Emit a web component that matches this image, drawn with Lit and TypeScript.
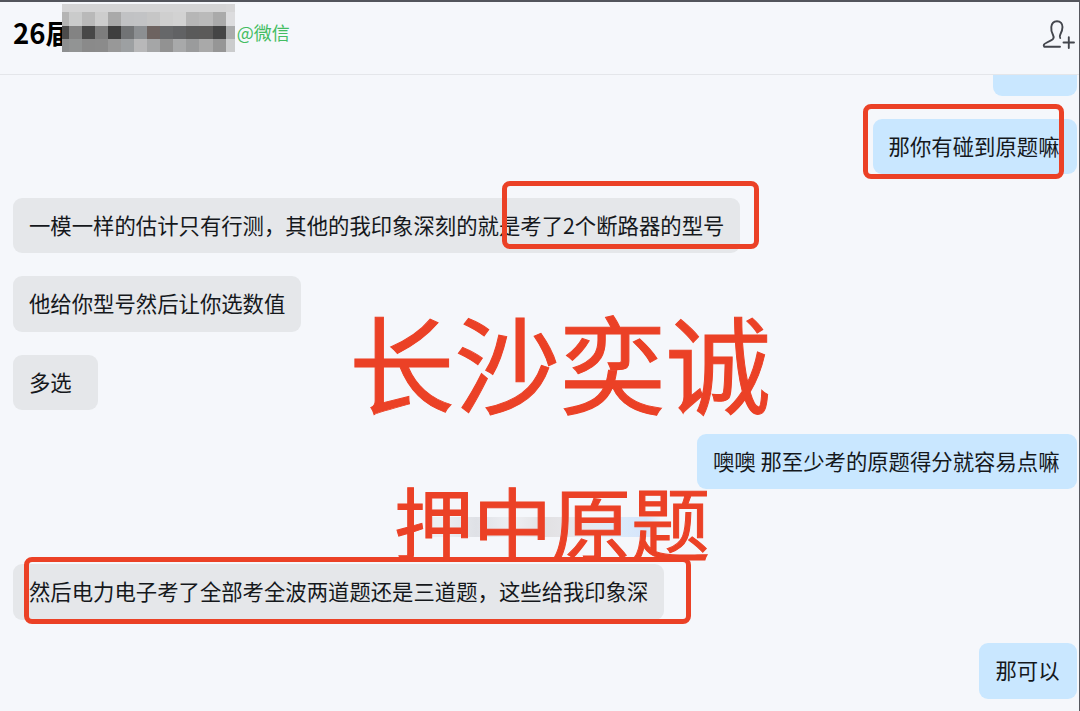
import {LitElement, css, html, svg} from 'lit';
import {customElement, property} from 'lit/decorators.js';
import {classMap} from 'lit/directives/class-map.js';
import {styleMap} from 'lit/directives/style-map.js';

type Entry = {from: 'me' | 'them' | 'time'; text: string};

const ENTRIES: Entry[] = [
  {from: 'me', text: ''},
  {from: 'me', text: '那你有碰到原题嘛'},
  {from: 'them', text: '一模一样的估计只有行测，其他的我印象深刻的就是考了2个断路器的型号'},
  {from: 'them', text: '他给你型号然后让你选数值'},
  {from: 'them', text: '多选'},
  {from: 'me', text: '噢噢 那至少考的原题得分就容易点嘛'},
  {from: 'time', text: ''},
  {from: 'them', text: '然后电力电子考了全部考全波两道题还是三道题，这些给我印象深'},
  {from: 'me', text: '那可以'},
];

// Censor blocks over the contact's name, row by row.
const COLUMNS = '6.5px repeat(12, 13.1px) 9px';
const MOSAIC = [
  '#d4d4d5 #d4d4d5 #d4d4d5 #d4d4d5 #d4d4d5 #d4d4d5 #d4d4d5 #d4d4d5 #d4d4d5 #d4d4d5 #d4d4d5 #d4d4d5 #d4d4d5 #d6d6d7',
  '#b4b4b4 #cacbcb #b9b9b9 #cdcdcd #a9a9a9 #c1c2c4 #c2c3c5 #c6c6c6 #cfcfcf #d2d2d2 #b6b6b6 #bababa #aaaaaa #dcdcde',
  '#4b4b4b #838383 #484848 #7d7d7d #3e3e3e #717375 #8c8f92 #6d6360 #666769 #616264 #5a5a5a #5b5a59 #454545 #aaabac',
  '#8d8f90 #929494 #8a8a8a #8b8b8b #989898 #9da0a2 #b8b8b9 #a5a6a7 #929292 #a8a9aa #9a9b9c #a9a9a9 #969696 #cbcccd',
].map(row => row.split(' '));

@customElement('chat-bubble')
class ChatBubble extends LitElement {

  @property({type: Boolean, reflect: true}) mine = false;

  static styles = css`
    :host {
      box-sizing: border-box;
      flex: none;
      min-width: 84.5px;
      height: 55.5px;
      padding: 0 16px;
      border-radius: 9px;
      background: #e5e7ea;
      line-height: 54px;
      white-space: nowrap;
    }
    :host([mine]) {
      padding-right: 17.5px;
      background: #c9e7ff;
    }
  `;

  render() {
    return html`<slot></slot>`;
  }
}

@customElement('app-root')
class AppRoot extends LitElement {

  static styles = css`
    :host {
      display: block;
      position: relative;
      box-sizing: border-box;
      width: 1080px;
      height: 711px;
      overflow: hidden;
      border-top: 2px solid #53555c;
      border-right: 1px solid #55575e;
      background: #f5f7fb;
      color: #15181c;
      font-family: "Noto Sans CJK SC", sans-serif;
      font-size: 21.36px;
    }
    .page {
      display: flex;
      flex-direction: column;
      height: 709px;
    }
    .header {
      display: flex;
      flex: none;
      box-sizing: border-box;
      height: 73px;
      padding: 2px 3px 0 13px;
      border-bottom: 1px solid #e4e6ea;
    }
    .name {
      width: 49px;
      color: #000;
      font-size: 27.5px;
      font-weight: 700;
      line-height: 56px;
      white-space: nowrap;
    }
    .mosaic {
      display: grid;
      position: relative;
      grid-template-rows: 8px 13.5px 13px 13px;
      align-content: start;
    }
    .source {
      padding-left: 2px;
      color: #43bd62;
      font-size: 18px;
      line-height: 57px;
    }
    .add {
      width: 34px;
      height: 32px;
      margin: 15px 0 0 auto;
    }
    .messages {
      display: flex;
      flex: 1;
      flex-direction: column;
      justify-content: flex-end;
      gap: 23.2px;
      min-height: 0;
      overflow: hidden;
      padding: 0 2px 12.5px 13px;
    }
    .row {
      display: flex;
      flex: none;
    }
    .row.me {
      justify-content: flex-end;
    }
    .row.time {
      justify-content: center;
      height: 28.8px;
      align-items: center;
    }
    .smudge {
      width: 230px;
      height: 20px;
      background: linear-gradient(90deg, #eceef2 0 5%, #dfe1e6 20%, #eeeff3 36%, #e2e1e3 50%, #e8e9ee 68%, #dcecfa 80%, #d5e4fb 94%, #eef1f8);
    }
    .box {
      position: absolute;
      box-sizing: border-box;
      border: 5.5px solid #eb4126;
      border-radius: 8px;
    }
    .box.asked { left: 863px; top: 102px; width: 201px; height: 74.5px; }
    .box.model { left: 502px; top: 179px; width: 256.5px; height: 68px; }
    .box.wave { left: 24px; top: 555px; width: 667px; height: 67px; }
    .stamp {
      position: absolute;
      color: #eb4126;
      white-space: nowrap;
      line-height: 1;
      -webkit-text-stroke: 1px #eb4126;
    }
    .stamp.brand { left: 349px; top: 306px; font-size: 105.500px; }
    .stamp.claim { left: 394px; top: 479px; font-size: 79px; }
  `;

  renderMosaic() {
    return html`
<div class="mosaic" style=${styleMap({gridTemplateColumns: COLUMNS})}>
  ${MOSAIC.flat().map(color => html`<i style=${styleMap({background: color})}></i>`)}
</div>`;
  }

  renderEntry(entry: Entry) {
    const content = entry.from == 'time' ?
      html`<div class="smudge"></div>` :
      html`<chat-bubble ?mine=${entry.from == 'me'}>${entry.text}</chat-bubble>`;
    return html`<div class=${classMap({row: true, [entry.from]: true})}>${content}</div>`;
  }

  render() {
    return html`
<div class="page">
  <div class="header">
    <div class="name">26届</div>
    ${this.renderMosaic()}
    <div class="source">@微信</div>
    <svg class="add" viewBox="0 0 34 32" fill="none" stroke="#43464d"
        stroke-width="1.9" stroke-linecap="round" stroke-linejoin="round">
      ${svg`<path d="M18 27.8H2.2C1 26 2.3 24.8 4 24L9.5 21.2C12.2 19.8 12 18 11 16C9.4 13 9 10.5 9.3 8C9.7 4.3 11.8 2.2 15 2.2C18.5 2.2 20.5 4.7 20.5 8C20.5 11 19.5 13.3 18.3 15.5C17.5 17 17.5 18 18.2 19"/>
      <path d="M21.5 23.5H32M26.8 18.3V29"/>`}
    </svg>
  </div>
  <div class="messages">${ENTRIES.map(e => this.renderEntry(e))}</div>
</div>
<div class="box asked"></div>
<div class="box model"></div>
<div class="box wave"></div>
<div class="stamp brand">长沙奕诚</div>
<div class="stamp claim">押中原题</div>
    `;
  }
}
